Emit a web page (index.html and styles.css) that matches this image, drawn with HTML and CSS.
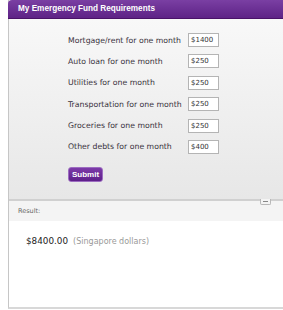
FILE: index.html
```html
<!DOCTYPE html>
<html lang="en">
<head>
    <meta charset="UTF-8">
    <title>My Emergency Fund Requirements</title>
    <link rel="stylesheet" href="styles.css">
</head>
<body>
    <div class="panel">
        <div class="panel-head">My Emergency Fund Requirements</div>

        <form class="fund-form">
            <div class="row"><label>Mortgage/rent for one month</label><input type="text" value="$1400"></div>
            <div class="row"><label>Auto loan for one month</label><input type="text" value="$250"></div>
            <div class="row"><label>Utilities for one month</label><input type="text" value="$250"></div>
            <div class="row"><label>Transportation for one month</label><input type="text" value="$250"></div>
            <div class="row"><label>Groceries for one month</label><input type="text" value="$250"></div>
            <div class="row"><label>Other debts for one month</label><input type="text" value="$400"></div>
            <button type="button" class="submit">Submit</button>
        </form>

        <div class="result-head">
            Result:
            <span class="toggle"></span>
        </div>
        <div class="result-body">
            <span class="amount">$8400.00</span> <span class="currency">(Singapore dollars)</span>
        </div>
    </div>
</body>
</html>
```

FILE: styles.css
```css
body {
    margin: 0;
    overflow: hidden;
    background: #fff;
    font-family: 'DejaVu Sans', Verdana, sans-serif;
}

.panel {
    margin-left: 8px;
    border-left: 1px solid #c6c6c6;
    border-bottom: 2px solid #d8d8d8;
}

.panel-head {
    height: 18px;
    line-height: 18px;
    padding-left: 10px;
    margin-left: -1px;
    border-top-left-radius: 4px;
    background: linear-gradient(#7a3fa3, #5e2386);
    border-bottom: 1px solid #4a1268;
    color: #fff;
    font-family: 'Liberation Sans', Arial, sans-serif;
    font-weight: bold;
    font-size: 8.2px;
}

.fund-form {
    margin: 0;
    padding: 14px 0 17px 59px;
    background: linear-gradient(#f8f8f8, #e7e7e7);
    display: flex;
    flex-direction: column;
    gap: 7.4px;
    border-bottom: 2px solid #d0d0d0;
}

.row {
    display: flex;
    align-items: center;
    height: 14px;
}

.row label {
    width: 120px;
    font-size: 7.75px;
    color: #3a3340;
}

.row input {
    box-sizing: border-box;
    width: 31px;
    height: 14px;
    padding: 0 2px;
    border: 1px solid #b4b4b4;
    background: #fff;
    font-family: 'DejaVu Sans', Verdana, sans-serif;
    font-size: 7px;
    color: #333;
}

.submit {
    align-self: flex-start;
    margin-top: 5.3px;
    box-sizing: border-box;
    width: 35px;
    height: 15px;
    padding: 0;
    border: 1px solid #9c6cc0;
    border-radius: 3px;
    background: linear-gradient(#7c3aa8, #5e1f8a);
    color: #fff;
    font-family: 'Liberation Sans', Arial, sans-serif;
    font-weight: bold;
    font-size: 8px;
}

.result-head {
    position: relative;
    height: 20px;
    line-height: 20px;
    padding-left: 9px;
    background: #f4f4f4;
    font-size: 6.5px;
    color: #666;
}

.toggle {
    position: absolute;
    top: -2px;
    left: 251px;
    width: 9px;
    height: 5px;
    border: 1px solid #b8b8b8;
    border-top: none;
    border-radius: 0 0 2px 2px;
    background: #f4f4f4;
}

.toggle:after {
    content: "";
    position: absolute;
    left: 2px;
    top: 2px;
    width: 5px;
    height: 1px;
    background: #888;
}

.result-body {
    height: 86px;
    padding: 8px 0 0 17px;
    box-sizing: border-box;
}

.amount {
    font-size: 8.8px;
    color: #222;
}

.currency {
    font-size: 8px;
    color: #999;
}
```
